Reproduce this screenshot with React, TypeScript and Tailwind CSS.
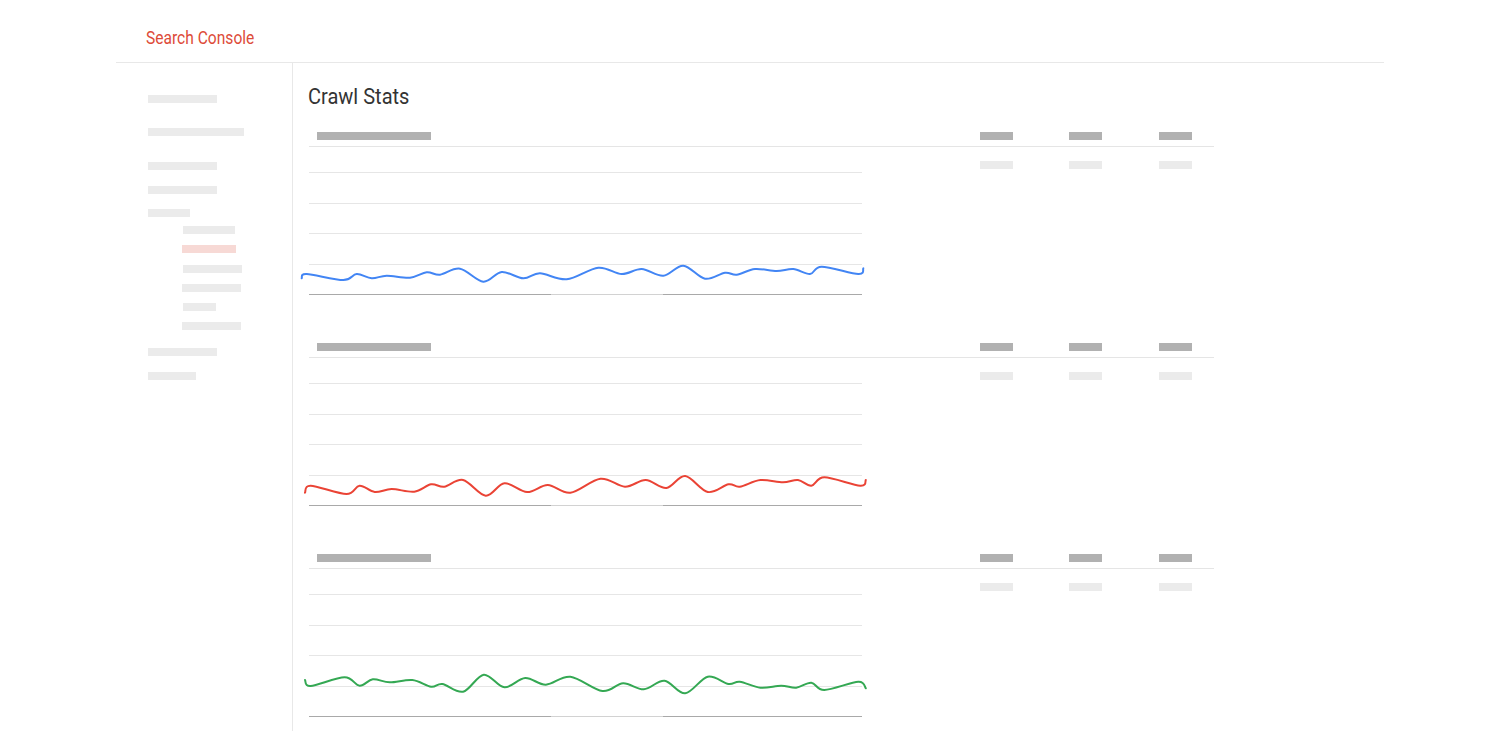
import React from "react";

type P = [number, number];

function smooth(pts: P[]): string {
  let d = `M ${pts[0][0]} ${pts[0][1]}`;
  for (let i = 0; i < pts.length - 1; i++) {
    const p0 = pts[i - 1] || pts[i];
    const p1 = pts[i];
    const p2 = pts[i + 1];
    const p3 = pts[i + 2] || p2;
    const c1x = p1[0] + (p2[0] - p0[0]) / 6;
    const c1y = p1[1] + (p2[1] - p0[1]) / 6;
    const c2x = p2[0] - (p3[0] - p1[0]) / 6;
    const c2y = p2[1] - (p3[1] - p1[1]) / 6;
    d += ` C ${c1x.toFixed(1)} ${c1y.toFixed(1)} ${c2x.toFixed(1)} ${c2y.toFixed(1)} ${p2[0]} ${p2[1]}`;
  }
  return d;
}

const blue: P[] = [
  [-7.3, 132.3], [-2.3, 128], [34.3, 134], [47.7, 128], [62.7, 132.3], [77.7, 129.7], [101, 131.7],
  [117.7, 126.3], [131, 128.7], [151, 122.7], [174.3, 135.7], [192.7, 126], [214.3, 132.3], [231, 127.3],
  [257.7, 133.3], [289.3, 121.7], [312.7, 128], [332.7, 123], [354.3, 129.7], [374.3, 119.7], [396, 132.7],
  [416, 126.7], [427.7, 128.7], [446, 123], [467.7, 125], [484.3, 123], [501, 128], [512.7, 120.7],
  [549.3, 128], [554.3, 122.3],
];

const red: P[] = [
  [-4, 135.7], [1.7, 128.7], [37.5, 137], [50.6, 128.7], [65.7, 135], [82.6, 132], [105.2, 134.7],
  [122.1, 127.3], [135.3, 129.7], [154.1, 123], [176.7, 138.7], [195.5, 126.3], [218.1, 135], [238.8, 128],
  [261.4, 135.7], [291.5, 121.7], [316, 129.7], [336.7, 123], [357.4, 131], [376.2, 119], [398.8, 135],
  [419.5, 127.3], [430.8, 129.7], [451.4, 123], [474, 125.3], [489, 123], [502.3, 128.7], [515.4, 120.3],
  [551.2, 128.7], [556.8, 123],
];

const green: P[] = [
  [-4, 112], [1.7, 118], [35.6, 109.3], [50.6, 117.7], [63.8, 111.3], [80.7, 114.3], [103.3, 112],
  [122.1, 118.7], [133.4, 116], [154.1, 123.7], [174.8, 106.7], [195.5, 119.3], [216.2, 110], [236.9, 116.7],
  [261.4, 108.7], [293.4, 123], [314.1, 115.3], [334.8, 121.3], [355.5, 112.7], [376.2, 125.3], [398.8, 108.7],
  [419.5, 116], [430.8, 113.7], [451.4, 119.7], [472.2, 117.7], [487.2, 119.7], [502.3, 114.7], [515.4, 122],
  [549.3, 113.7], [556.8, 120.3],
];

const sideItems = [
  { cls: "mt-[32px] ml-0 w-[69px] bg-[#ebebeb]" },
  { cls: "mt-[25px] ml-0 w-[96px] bg-[#ebebeb]" },
  { cls: "mt-[26px] ml-0 w-[69px] bg-[#ebebeb]" },
  { cls: "mt-[16px] ml-0 w-[69px] bg-[#ebebeb]" },
  { cls: "mt-[15px] ml-0 w-[42px] bg-[#ebebeb]" },
  { cls: "mt-[9px] ml-[35px] w-[52px] bg-[#ebebeb]" },
  { cls: "mt-[11px] ml-[34px] w-[54px] bg-[#f7d9d5]" },
  { cls: "mt-[12px] ml-[35px] w-[59px] bg-[#ebebeb]" },
  { cls: "mt-[11px] ml-[34px] w-[59px] bg-[#ebebeb]" },
  { cls: "mt-[11px] ml-[35px] w-[33px] bg-[#ebebeb]" },
  { cls: "mt-[11px] ml-[34px] w-[59px] bg-[#ebebeb]" },
  { cls: "mt-[18px] ml-0 w-[69px] bg-[#ebebeb]" },
  { cls: "mt-[16px] ml-0 w-[48px] bg-[#ebebeb]" },
];

function Chart({ pts, color }: { pts: P[]; color: string }) {
  const grid = [26, 57, 87, 118];
  return (
    <svg width="553" height="170" viewBox="0 1 553 170" className="overflow-visible shrink-0">
      {grid.map((y) => (
        <rect key={y} x="0" y={y} width="553" height="1" fill="#e6e6e6" />
      ))}
      <rect x="0" y="148" width="553" height="1" fill="#a9a9a9" />
      <rect x="242" y="148" width="112" height="1" fill="#d2d2d2" />
      <path d={smooth(pts)} fill="none" stroke={color} strokeWidth="2" strokeLinecap="round" strokeLinejoin="round" />
    </svg>
  );
}

function Section({ pts, color, bodyH }: { pts: P[]; color: string; bodyH: string }) {
  return (
    <div className="w-[905px]">
      <div className="flex items-start pb-[6px] border-b border-[#e5e5e5]">
        <div className="ml-2 w-[114px] h-2 bg-[#b1b1b1]" />
        <div className="ml-[549px] w-[33px] h-2 bg-[#b1b1b1]" />
        <div className="ml-[56px] w-[33px] h-2 bg-[#b1b1b1]" />
        <div className="ml-[57px] w-[33px] h-2 bg-[#b1b1b1]" />
      </div>
      <div className={`flex items-start ${bodyH}`}>
        <Chart pts={pts} color={color} />
        <div className="ml-[118px] mt-[14px] w-[33px] h-2 bg-[#ebebeb]" />
        <div className="ml-[56px] mt-[14px] w-[33px] h-2 bg-[#ebebeb]" />
        <div className="ml-[57px] mt-[14px] w-[33px] h-2 bg-[#ebebeb]" />
      </div>
    </div>
  );
}

export default function App() {
  return (
    <div
      className="w-[1500px] h-[750px] bg-white overflow-hidden"
      style={{ fontFamily: 'Roboto, "Liberation Sans", sans-serif' }}
    >
      <div className="w-[1268px] mx-auto">
        <header className="h-[63px] border-b border-[#e8e8e8] pl-[30px] pt-[26px]">
          <div className="text-[19px] leading-[24px] text-[#dd4b39] origin-left scale-x-[0.82] whitespace-nowrap">
            Search Console
          </div>
        </header>
        <div className="flex">
          <aside className="w-[177px] h-[668px] border-r border-[#e8e8e8] shrink-0 pl-[32px]">
            <div className="flex flex-col items-start">
              {sideItems.map((it, i) => (
                <div key={i} className={`h-2 ${it.cls}`} />
              ))}
            </div>
          </aside>
          <main className="flex-1 pl-[16px] pt-[20px]">
            <h1 className="text-[22px] leading-[28px] text-[#333333] font-normal origin-left scale-x-[0.91] whitespace-nowrap -ml-[1px]">
              Crawl Stats
            </h1>
            <div className="mt-[21px] flex flex-col">
              <Section pts={blue} color="#4285f4" bodyH="h-[196px]" />
              <Section pts={red} color="#ea4335" bodyH="h-[196px]" />
              <Section pts={green} color="#34a853" bodyH="h-[170px]" />
            </div>
          </main>
        </div>
      </div>
    </div>
  );
}
